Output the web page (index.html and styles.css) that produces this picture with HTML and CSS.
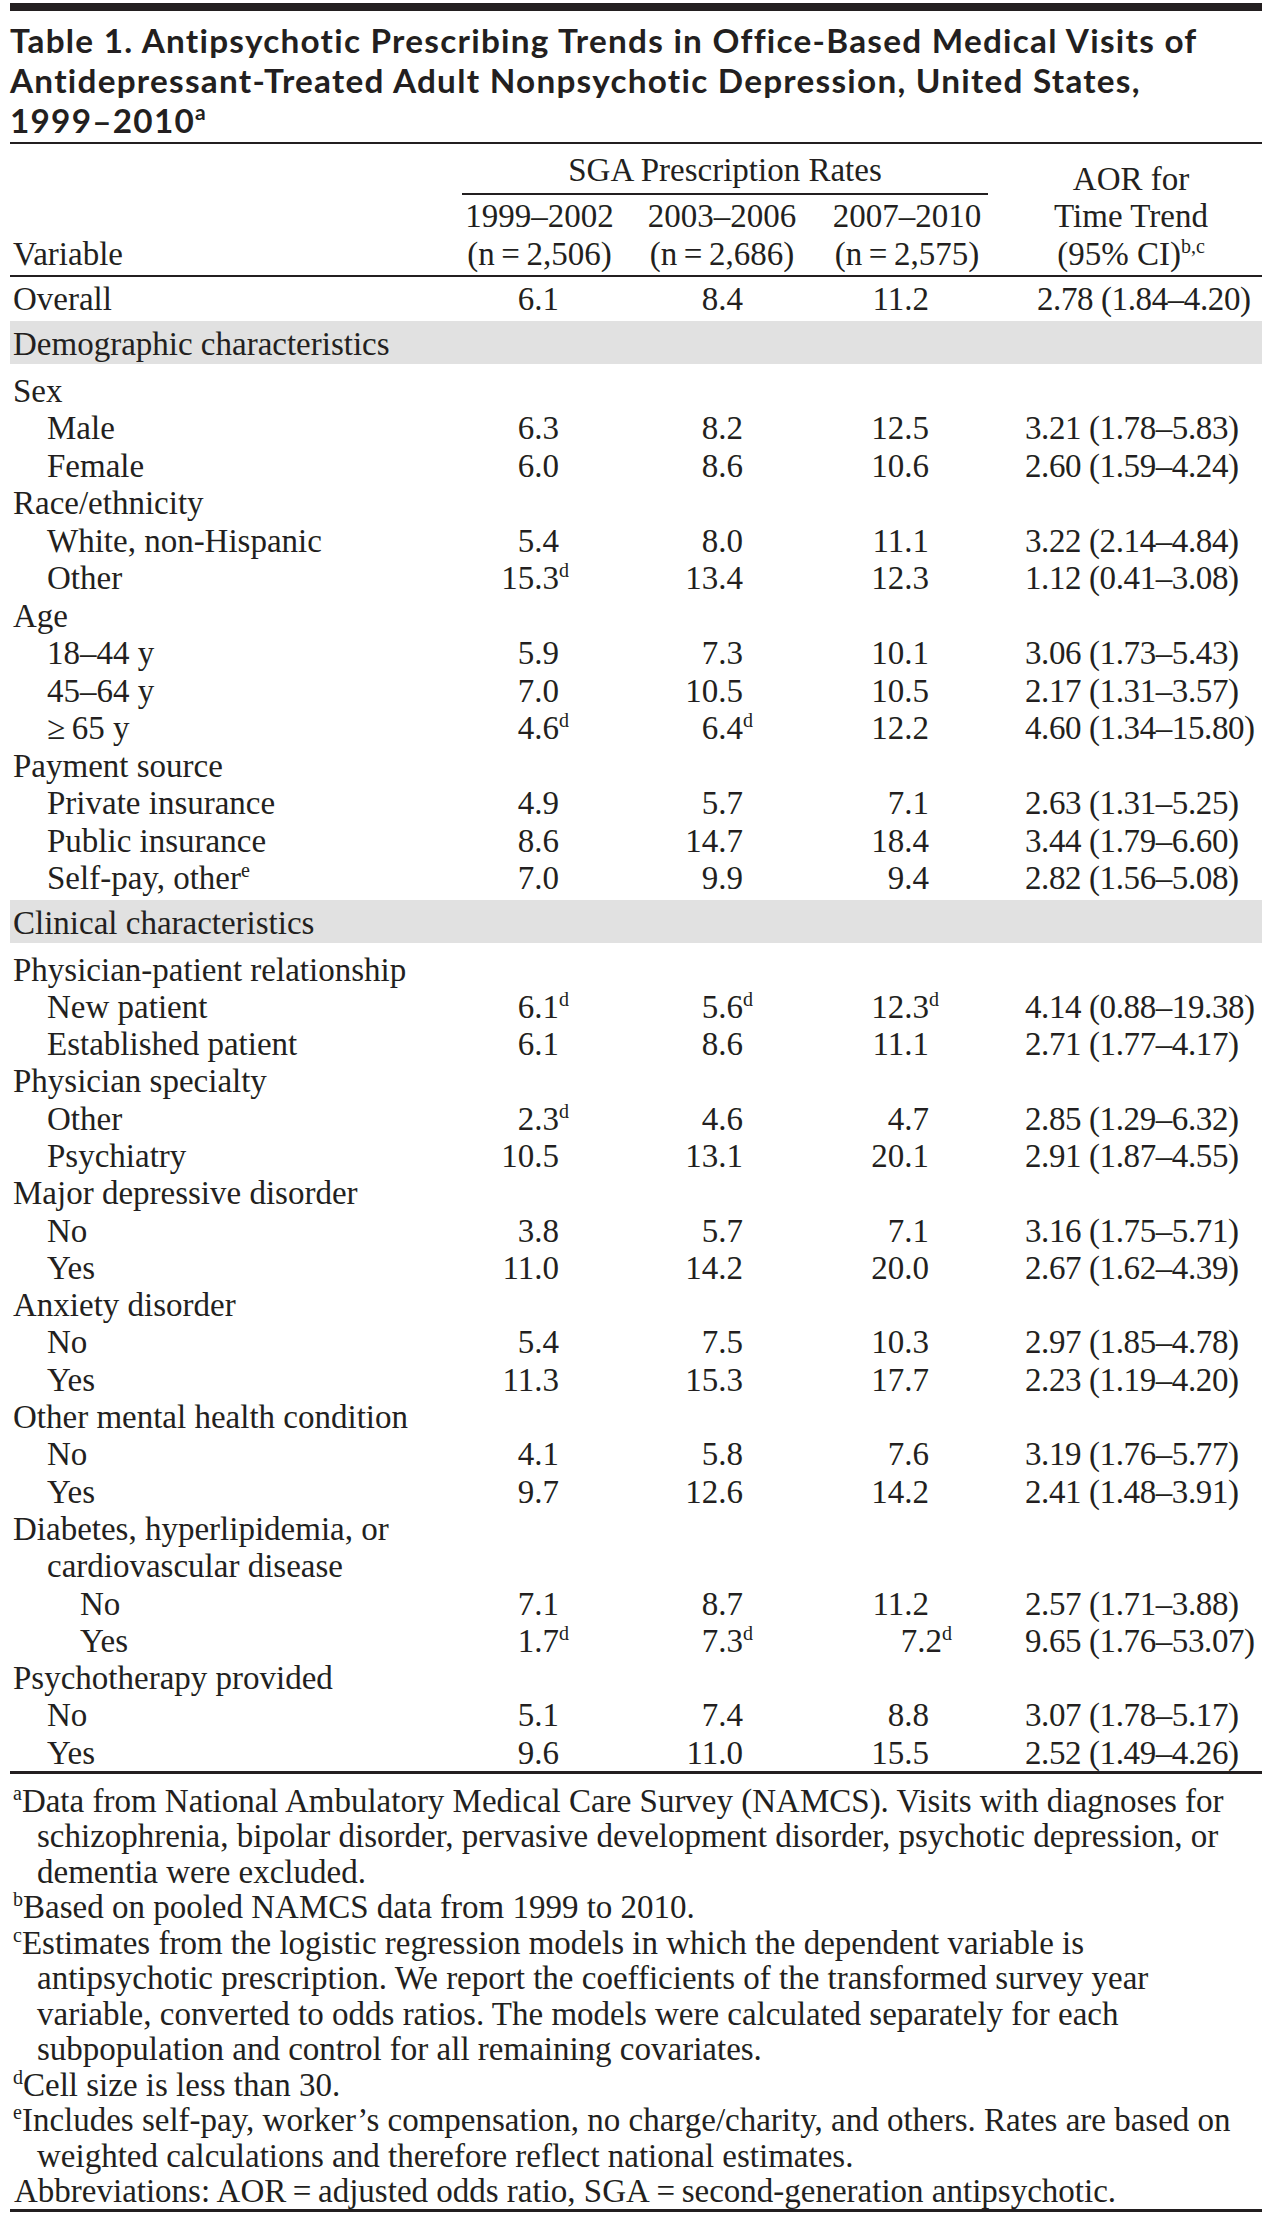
FILE: index.html
```html
<!DOCTYPE html>
<html lang="en">
<head>
<meta charset="utf-8">
<title>Table 1</title>
<link rel="stylesheet" href="styles.css">
</head>
<body>
<div class="page">
  <div class="topbar"></div>
  <h1 class="title">Table 1. Antipsychotic Prescribing Trends in Office-Based Medical Visits of<br>Antidepressant-Treated Adult Nonpsychotic Depression, United States,<br>1999–2010<sup class="tsup">a</sup></h1>
  <div class="rule thin"></div>

  <div class="thead">
    <div class="h-var">Variable</div>
    <div class="h-sga"><span class="sga-text">SGA Prescription Rates</span></div>
    <div class="h-year y1">1999–2002<br>(n&thinsp;=&thinsp;2,506)</div>
    <div class="h-year y2">2003–2006<br>(n&thinsp;=&thinsp;2,686)</div>
    <div class="h-year y3">2007–2010<br>(n&thinsp;=&thinsp;2,575)</div>
    <div class="h-aor">AOR for<br>Time Trend<br>(95% CI)<sup class="sup">b,c</sup></div>
  </div>
  <div class="rule thin"></div>

  <div class="tbody">
    <div class="row"><div class="lbl">Overall</div><div class="num">6.1</div><div class="num">8.4</div><div class="num">11.2</div><div class="aor shift">2.78 (1.84–4.20)</div></div>
    <div class="band">Demographic characteristics</div>

    <div class="sect">
      <div class="row"><div class="lbl">Sex</div></div>
      <div class="row"><div class="lbl l1">Male</div><div class="num">6.3</div><div class="num">8.2</div><div class="num">12.5</div><div class="aor">3.21 (1.78–5.83)</div></div>
      <div class="row"><div class="lbl l1">Female</div><div class="num">6.0</div><div class="num">8.6</div><div class="num">10.6</div><div class="aor">2.60 (1.59–4.24)</div></div>
      <div class="row"><div class="lbl">Race/ethnicity</div></div>
      <div class="row"><div class="lbl l1">White, non-Hispanic</div><div class="num">5.4</div><div class="num">8.0</div><div class="num">11.1</div><div class="aor">3.22 (2.14–4.84)</div></div>
      <div class="row"><div class="lbl l1">Other</div><div class="num">15.3<span class="hang"><sup class="sup">d</sup></span></div><div class="num">13.4</div><div class="num">12.3</div><div class="aor">1.12 (0.41–3.08)</div></div>
      <div class="row"><div class="lbl">Age</div></div>
      <div class="row"><div class="lbl l1">18–44 y</div><div class="num">5.9</div><div class="num">7.3</div><div class="num">10.1</div><div class="aor">3.06 (1.73–5.43)</div></div>
      <div class="row"><div class="lbl l1">45–64 y</div><div class="num">7.0</div><div class="num">10.5</div><div class="num">10.5</div><div class="aor">2.17 (1.31–3.57)</div></div>
      <div class="row"><div class="lbl l1">≥&thinsp;65 y</div><div class="num">4.6<span class="hang"><sup class="sup">d</sup></span></div><div class="num">6.4<span class="hang"><sup class="sup">d</sup></span></div><div class="num">12.2</div><div class="aor">4.60 (1.34–15.80)</div></div>
      <div class="row"><div class="lbl">Payment source</div></div>
      <div class="row"><div class="lbl l1">Private insurance</div><div class="num">4.9</div><div class="num">5.7</div><div class="num">7.1</div><div class="aor">2.63 (1.31–5.25)</div></div>
      <div class="row"><div class="lbl l1">Public insurance</div><div class="num">8.6</div><div class="num">14.7</div><div class="num">18.4</div><div class="aor">3.44 (1.79–6.60)</div></div>
      <div class="row"><div class="lbl l1">Self-pay, other<sup class="sup">e</sup></div><div class="num">7.0</div><div class="num">9.9</div><div class="num">9.4</div><div class="aor">2.82 (1.56–5.08)</div></div>
    </div>

    <div class="band">Clinical characteristics</div>

    <div class="sect clin">
      <div class="row"><div class="lbl">Physician-patient relationship</div></div>
      <div class="row"><div class="lbl l1">New patient</div><div class="num">6.1<span class="hang"><sup class="sup">d</sup></span></div><div class="num">5.6<span class="hang"><sup class="sup">d</sup></span></div><div class="num">12.3<span class="hang"><sup class="sup">d</sup></span></div><div class="aor">4.14 (0.88–19.38)</div></div>
      <div class="row"><div class="lbl l1">Established patient</div><div class="num">6.1</div><div class="num">8.6</div><div class="num">11.1</div><div class="aor">2.71 (1.77–4.17)</div></div>
      <div class="row"><div class="lbl">Physician specialty</div></div>
      <div class="row"><div class="lbl l1">Other</div><div class="num">2.3<span class="hang"><sup class="sup">d</sup></span></div><div class="num">4.6</div><div class="num">4.7</div><div class="aor">2.85 (1.29–6.32)</div></div>
      <div class="row"><div class="lbl l1">Psychiatry</div><div class="num">10.5</div><div class="num">13.1</div><div class="num">20.1</div><div class="aor">2.91 (1.87–4.55)</div></div>
      <div class="row"><div class="lbl">Major depressive disorder</div></div>
      <div class="row"><div class="lbl l1">No</div><div class="num">3.8</div><div class="num">5.7</div><div class="num">7.1</div><div class="aor">3.16 (1.75–5.71)</div></div>
      <div class="row"><div class="lbl l1">Yes</div><div class="num">11.0</div><div class="num">14.2</div><div class="num">20.0</div><div class="aor">2.67 (1.62–4.39)</div></div>
      <div class="row"><div class="lbl">Anxiety disorder</div></div>
      <div class="row"><div class="lbl l1">No</div><div class="num">5.4</div><div class="num">7.5</div><div class="num">10.3</div><div class="aor">2.97 (1.85–4.78)</div></div>
      <div class="row"><div class="lbl l1">Yes</div><div class="num">11.3</div><div class="num">15.3</div><div class="num">17.7</div><div class="aor">2.23 (1.19–4.20)</div></div>
      <div class="row"><div class="lbl">Other mental health condition</div></div>
      <div class="row"><div class="lbl l1">No</div><div class="num">4.1</div><div class="num">5.8</div><div class="num">7.6</div><div class="aor">3.19 (1.76–5.77)</div></div>
      <div class="row"><div class="lbl l1">Yes</div><div class="num">9.7</div><div class="num">12.6</div><div class="num">14.2</div><div class="aor">2.41 (1.48–3.91)</div></div>
      <div class="row"><div class="lbl">Diabetes, hyperlipidemia, or</div></div>
      <div class="row"><div class="lbl l1">cardiovascular disease</div></div>
      <div class="row"><div class="lbl l2">No</div><div class="num">7.1</div><div class="num">8.7</div><div class="num">11.2</div><div class="aor">2.57 (1.71–3.88)</div></div>
      <div class="row"><div class="lbl l2">Yes</div><div class="num">1.7<span class="hang"><sup class="sup">d</sup></span></div><div class="num">7.3<span class="hang"><sup class="sup">d</sup></span></div><div class="num nudge">7.2<span class="hang"><sup class="sup">d</sup></span></div><div class="aor">9.65 (1.76–53.07)</div></div>
      <div class="row"><div class="lbl">Psychotherapy provided</div></div>
      <div class="row"><div class="lbl l1">No</div><div class="num">5.1</div><div class="num">7.4</div><div class="num">8.8</div><div class="aor">3.07 (1.78–5.17)</div></div>
      <div class="row"><div class="lbl l1">Yes</div><div class="num">9.6</div><div class="num">11.0</div><div class="num">15.5</div><div class="aor">2.52 (1.49–4.26)</div></div>
    </div>
  </div>
  <div class="rule mid end"></div>

  <div class="notes">
    <p class="note"><sup class="nsup">a</sup>Data from National Ambulatory Medical Care Survey (NAMCS). Visits with diagnoses for<br>schizophrenia, bipolar disorder, pervasive development disorder, psychotic depression, or<br>dementia were excluded.</p>
    <p class="note"><sup class="nsup">b</sup>Based on pooled NAMCS data from 1999 to 2010.</p>
    <p class="note"><sup class="nsup">c</sup>Estimates from the logistic regression models in which the dependent variable is<br>antipsychotic prescription. We report the coefficients of the transformed survey year<br>variable, converted to odds ratios. The models were calculated separately for each<br>subpopulation and control for all remaining covariates.</p>
    <p class="note"><sup class="nsup">d</sup>Cell size is less than 30.</p>
    <p class="note"><sup class="nsup">e</sup>Includes self-pay, worker’s compensation, no charge/charity, and others. Rates are based on<br>weighted calculations and therefore reflect national estimates.</p>
    <p class="note plain">Abbreviations: AOR&thinsp;=&thinsp;adjusted odds ratio, SGA&thinsp;=&thinsp;second-generation antipsychotic.</p>
  </div>
  <div class="rule mid"></div>
</div>
</body>
</html>
```

FILE: styles.css
```css
html, body {
  margin: 0;
  padding: 0;
  background: #ffffff;
}

body {
  color: #231f20;
  font-family: "Liberation Serif", "Times New Roman", serif;
}

.page {
  width: 1252px;
  margin-left: 10px;
  padding-top: 3px;
}

.topbar {
  height: 8px;
  background: #231f20;
}

.title {
  margin: 9px 0 2px 0;
  font-family: Lato, "Open Sans", sans-serif;
  font-weight: 700;
  font-size: 33.3px;
  line-height: 40px;
  letter-spacing: 1.25px;
  color: #231f20;
}

.tsup {
  font-size: 21px;
  line-height: 0;
  vertical-align: 13px;
  letter-spacing: 0;
}

.rule {
  background: #231f20;
}

.rule.thin {
  height: 2px;
}

.rule.mid {
  height: 3px;
}

.rule.end {
  margin-top: 3px;
}

/* column template: label | 1999-2002 | 2003-2006 | 2007-2010 | AOR */
.thead,
.row {
  display: grid;
  grid-template-columns: 439px 181px 184px 186px 262px;
}

.thead {
  grid-template-rows: auto auto;
  font-size: 33px;
  line-height: 37.5px;
  padding-bottom: 2px;
}

.h-var {
  grid-column: 1;
  grid-row: 1 / span 2;
  align-self: end;
  padding-left: 3px;
}

.h-sga {
  grid-column: 2 / span 3;
  grid-row: 1;
  text-align: center;
  margin: 8px 12px 0 13px;
  padding-bottom: 4px;
  border-bottom: 2px solid #231f20;
  line-height: 37px;
}

.h-year {
  grid-row: 2;
  text-align: center;
  padding-top: 3px;
}

.y1 { grid-column: 2; }
.y2 { grid-column: 3; }
.y3 { grid-column: 4; }

.h-aor {
  grid-column: 5;
  grid-row: 1 / span 2;
  align-self: end;
  text-align: center;
}

.sup {
  font-size: 20px;
  line-height: 0;
  vertical-align: 12px;
}

.tbody {
  font-size: 33px;
}

.row {
  box-sizing: border-box;
  height: 37.5px;
  line-height: 37.5px;
  padding-top: 4px;
}

.clin .row {
  height: 37.3px;
}

.lbl {
  grid-column: 1;
  padding-left: 3px;
  white-space: nowrap;
}

.lbl.l1 {
  padding-left: 37px;
}

.lbl.l2 {
  padding-left: 70px;
}

.num {
  text-align: right;
  padding-right: 71px;
  white-space: nowrap;
}

.num.nudge {
  padding-right: 58px;
}

.hang {
  display: inline-block;
  width: 0;
  white-space: nowrap;
}

.aor {
  grid-column: 5;
  padding-left: 25px;
  white-space: nowrap;
  letter-spacing: -0.4px;
}

.aor.shift {
  padding-left: 37px;
}

.band {
  box-sizing: border-box;
  background: #e1e1e1;
  height: 43px;
  line-height: 40px;
  padding-top: 3px;
  margin: 6px 0 5px 0;
  padding-left: 3px;
  font-size: 33px;
}

.notes {
  padding: 10px 0 0 0;
}

.note {
  margin: 0;
  font-size: 33px;
  line-height: 35.45px;
  padding-left: 27px;
  text-indent: -24px;
  white-space: nowrap;
}

.note.plain {
  padding-left: 4px;
  text-indent: 0;
}

.nsup {
  font-size: 20px;
  line-height: 0;
  vertical-align: 12px;
}
```
